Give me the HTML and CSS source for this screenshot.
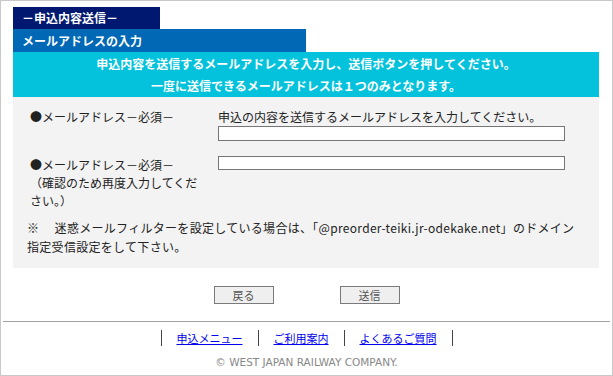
FILE: index.html
```html
<!doctype html>
<html lang="ja">
<head>
<meta charset="utf-8">
<title>メールアドレスの入力</title>
<link rel="stylesheet" href="styles.css">
</head>
<body>
<div class="page">
    <div class="content">
        <div class="title">－申込内容送信－</div>
        <h2 class="subtitle">メールアドレスの入力</h2>
        <div class="lead">
            申込内容を送信するメールアドレスを入力し、送信ボタンを押してください。<br>
            一度に送信できるメールアドレスは１つのみとなります。
        </div>
        <div class="form">
            <div class="row">
                <div class="label">●メールアドレス－必須－</div>
                <div class="field">
                    <div class="hint">申込の内容を送信するメールアドレスを入力してください。</div>
                    <input type="text" class="mail">
                </div>
            </div>
            <div class="row second">
                <div class="label">●メールアドレス－必須－<br>（確認のため再度入力してください。）</div>
                <div class="field">
                    <input type="text" class="mail">
                </div>
            </div>
            <p class="note">※&nbsp;　迷惑メールフィルターを設定している場合は、「@preorder-teiki.jr-odekake.net」のドメイン指定受信設定をして下さい。</p>
        </div>
        <div class="buttons">
            <button type="button">戻る</button>
            <button type="submit">送信</button>
        </div>
    </div>
    <hr>
    <ul class="footnav">
        <li><a href="#">申込メニュー</a></li>
        <li><a href="#">ご利用案内</a></li>
        <li><a href="#">よくあるご質問</a></li>
    </ul>
    <p class="copy">© WEST JAPAN RAILWAY COMPANY.</p>
</div>
</body>
</html>
```

FILE: styles.css
```css
BODY {
    margin: 0;
    padding: 0;
    font: 12px "Noto Sans CJK JP", "Noto Sans", sans-serif;
    color: #222;
}
.page {
    box-sizing: border-box;
    width: 613px;
    height: 376px;
    border: solid 1px #c8c8c8;
}
.content {
    padding: 6px 12px 0 12px;
}
.title {
    width: 138px;
    height: 22px;
    line-height: 22px;
    padding-left: 9px;
    background: #00186f;
    color: #fff;
    font-weight: bold;
}
.subtitle {
    margin: 0;
    width: 284px;
    height: 23px;
    line-height: 23px;
    padding-left: 9px;
    background: #0068b5;
    color: #fff;
    font-size: 12px;
}
.lead {
    width: 586px;
    height: 45px;
    line-height: 22px;
    padding-top: 1px;
    box-sizing: border-box;
    background: #04c2dc;
    color: #fff;
    font-weight: bold;
    text-align: center;
}
.form {
    box-sizing: border-box;
    width: 586px;
    height: 171px;
    padding: 11px 16px 0 14px;
    background: #f3f3f3;
}
.row {
    display: grid;
    grid-template-columns: 176px 347px;
    column-gap: 12px;
    padding-left: 3px;
    line-height: 18px;
}
.row.second {
    margin-top: 15px;
}
.mail {
    display: block;
    box-sizing: border-box;
    width: 347px;
    height: 15px;
    margin: 0;
    padding: 0 2px;
    border: solid 1px #767676;
    background: #fff;
}
.second .mail {
    height: 14px;
}
.note {
    margin: 8px 0 0 0;
    line-height: 19px;
    letter-spacing: 0.3px;
}
.buttons {
    display: flex;
    justify-content: center;
    gap: 66px;
    padding: 18px 0 17px 0;
}
BUTTON {
    width: 60px;
    height: 18px;
    padding: 0;
    font: 11px "Noto Sans CJK JP", sans-serif;
    line-height: 16px;
    color: #555;
    background: #efefef;
    border: solid 1px #7a7a7a;
}
HR {
    margin: 0 2px;
    border: 0;
    border-top: solid 1px #a0a0a0;
}
.footnav {
    display: flex;
    justify-content: center;
    margin: 8px 0 0 0;
    padding: 0;
    list-style: none;
    font-size: 11px;
    line-height: 16px;
}
.footnav LI {
    border-left: solid 1px #444;
    padding: 0 15px;
}
.footnav LI:last-child {
    border-right: solid 1px #444;
}
.footnav A {
    color: #0000ee;
    text-decoration: underline;
}
.copy {
    margin: 10px 0 0 0;
    text-align: center;
    font: 10.5px "DejaVu Sans", Verdana, sans-serif;
    color: #888;
}
```
